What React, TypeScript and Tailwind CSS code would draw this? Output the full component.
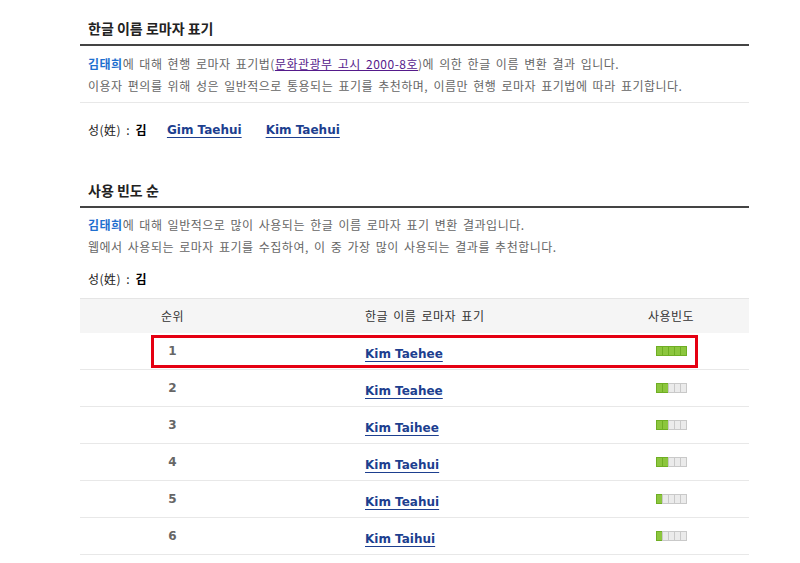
import React from 'react';

const ko = "font-['Noto_Sans_CJK_KR','Noto_Sans',sans-serif]";
const latin = "font-['DejaVu_Sans','Noto_Sans_CJK_KR',sans-serif]";
// 본문 한글 간격 (굴림/돋움 느낌)
const koSpacing = 'tracking-[0.5px] [word-spacing:2px]';

type Row = { rank: number; name: string; level: number };

const rows: Row[] = [
  { rank: 1, name: 'Kim Taehee', level: 5 },
  { rank: 2, name: 'Kim Teahee', level: 2 },
  { rank: 3, name: 'Kim Taihee', level: 2 },
  { rank: 4, name: 'Kim Taehui', level: 2 },
  { rank: 5, name: 'Kim Teahui', level: 1 },
  { rank: 6, name: 'Kim Taihui', level: 1 },
];

const FreqBar: React.FC<{ level: number }> = ({ level }) => (
  <div className="flex">
    {[0, 1, 2, 3, 4].map((i) => (
      <span
        key={i}
        className={
          'block w-[7px] h-[10px] border ' +
          (i > 0 ? '-ml-px ' : '') +
          (i < level ? 'bg-[#8cc63e] border-[#6fae24]' : 'bg-[#ebebeb] border-[#c9c9c9]')
        }
      />
    ))}
  </div>
);

const NameLink: React.FC<{ children: React.ReactNode }> = ({ children }) => (
  <a className={`${latin} text-[12px] font-bold text-[#1d3f8f] tracking-normal [word-spacing:normal] underline underline-offset-[3px] decoration-[1px]`}>
    {children}
  </a>
);

const SurnameLabel: React.FC = () => (
  <span className={`text-[12px] text-[#222] ${koSpacing}`}>
    성(姓) : <b className="text-black">김</b>
  </span>
);

const SectionTitle: React.FC<{ children: React.ReactNode }> = ({ children }) => (
  <h2 className="text-[14px] leading-[20px] font-bold text-[#222] px-[8px] pb-[6px] border-b-2 border-[#444]">
    {children}
  </h2>
);

export default function App() {
  return (
    <div className={`${ko} bg-white min-h-[563px] w-[800px]`}>
      <div className="ml-[80px] w-[669px] pt-[18px]">
        {/* 한글 이름 로마자 표기 */}
        <SectionTitle>한글 이름 로마자 표기</SectionTitle>
        <div className={`px-[8px] pt-[7px] pb-[5px] border-b border-[#e8e8e8] text-[12px] leading-[22px] text-[#666] ${koSpacing}`}>
          <p>
            <b className="text-[#1f6fcf]">김태희</b>에 대해 현행 로마자 표기법(
            <a className="text-[#551a8b] underline">문화관광부 고시 2000-8호</a>)에 의한 한글 이름 변환 결과 입니다.
          </p>
          <p>이용자 편의를 위해 성은 일반적으로 통용되는 표기를 추천하며, 이름만 현행 로마자 표기법에 따라 표기합니다.</p>
        </div>
        <div className="flex items-center px-[8px] pt-[17px] h-[37px]">
          <SurnameLabel />
          <div className="ml-[20px] flex gap-[24px]">
            <NameLink>Gim Taehui</NameLink>
            <NameLink>Kim Taehui</NameLink>
          </div>
        </div>

        {/* 사용 빈도 순 */}
        <div className="mt-[40px]">
          <SectionTitle>사용 빈도 순</SectionTitle>
        </div>
        <div className={`px-[8px] pt-[6px] text-[12px] leading-[22px] text-[#666] ${koSpacing}`}>
          <p>
            <b className="text-[#1f6fcf]">김태희</b>에 대해 일반적으로 많이 사용되는 한글 이름 로마자 표기 변환 결과입니다.
          </p>
          <p>웹에서 사용되는 로마자 표기를 수집하여, 이 중 가장 많이 사용되는 결과를 추천합니다.</p>
        </div>
        <div className="px-[8px] mt-[11px] h-[20px] flex items-center">
          <SurnameLabel />
        </div>

        <div className="mt-[9px]">
          <div className={`grid grid-cols-[185px_1fr_156px] h-[35px] items-center bg-[#f5f5f5] border-t border-[#e5e5e5] text-[12px] text-[#333] ${koSpacing}`}>
            <div className="text-center">순위</div>
            <div className="pl-[100px]">한글 이름 로마자 표기</div>
            <div className="text-center">사용빈도</div>
          </div>
          {rows.map((r) => (
            <div
              key={r.rank}
              className="relative grid grid-cols-[185px_1fr_156px] h-[37px] items-center border-b border-[#e8e8e8]"
            >
              <div className={`${latin} text-center text-[12px] font-bold text-[#666]`}>{r.rank}</div>
              <div className="pl-[100px]">
                <NameLink>{r.name}</NameLink>
              </div>
              <div className="flex justify-center">
                <FreqBar level={r.level} />
              </div>
              {r.rank === 1 && (
                <div className="absolute left-[71px] top-[2px] w-[547px] h-[33px] border-[3px] border-[#e50012] pointer-events-none" />
              )}
            </div>
          ))}
        </div>
      </div>
    </div>
  );
}
